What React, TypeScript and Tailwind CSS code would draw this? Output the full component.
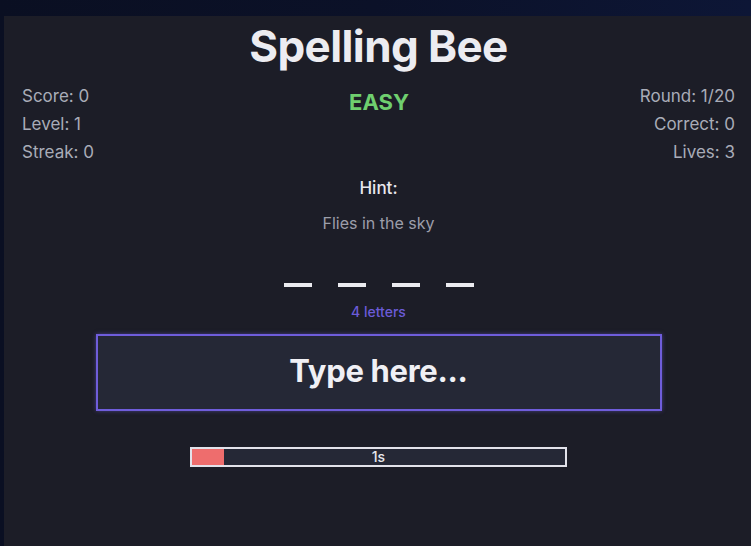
import React from "react";

const leftStats = ["Score: 0", "Level: 1", "Streak: 0"];
const rightStats = ["Round: 1/20", "Correct: 0", "Lives: 3"];
const wordLength = 4;
const timeLeftPct = 8.6;

export default function App() {
  return (
    <div
      className="w-[751px] h-[546px] overflow-hidden bg-gradient-to-r from-[#0a0f22] via-[#0b1128] to-[#0d1636] pt-[16px] pl-[4px]"
      style={{ fontFamily: "Inter, 'Noto Sans', sans-serif" }}
    >
      <div className="h-full bg-[#1c1d27] pt-[4px] pl-[18px] pr-[16px] flex flex-col items-stretch">
        <h1 className="text-center text-[44px] leading-[52px] font-bold tracking-[-0.6px] text-[#ececf1]">
          Spelling Bee
        </h1>

        <div className="mt-[10px] flex justify-between items-start">
          <div className="w-[120px] flex flex-col text-[17px] leading-[28px] text-[#a9acb8]">
            {leftStats.map((s) => (
              <span key={s}>{s}</span>
            ))}
          </div>
          <div className="mt-[6px] text-[22px] leading-[28px] font-bold text-[#6fcf6f] pl-[1px]">
            EASY
          </div>
          <div className="w-[120px] flex flex-col items-end text-[17px] leading-[28px] text-[#a9acb8]">
            {rightStats.map((s) => (
              <span key={s}>{s}</span>
            ))}
          </div>
        </div>

        <div className="mt-[10px] flex flex-col items-center">
          <div className="text-[17px] leading-[24px] font-medium text-[#e8e8ee]">Hint:</div>
          <div className="mt-[11px] text-[16px] leading-[24px] text-[#9c9eaa]">Flies in the sky</div>

          <div className="mt-[48px] flex gap-[26px]">
            {Array.from({ length: wordLength }).map((_, i) => (
              <div key={i} className="w-[28px] h-[4px] bg-[#ebebf0]" />
            ))}
          </div>

          <div className="mt-[15px] text-[14px] leading-[20px] font-medium text-[#6b5bd8]">
            {wordLength} letters
          </div>

          <input
            readOnly
            placeholder="Type here..."
            className="mt-[12px] w-[566px] h-[77px] bg-[#252836] border-2 border-[#6f5ddb] shadow-[0_0_4px_rgba(111,93,219,0.5)] text-center text-[31px] font-bold tracking-[-0.3px] text-[#f0f0f5] placeholder:text-[#f0f0f5] pb-[5px] outline-none"
          />

          <div className="mt-[36px] relative w-[377px] h-[20px] border-2 border-[#e2e2ea] bg-[#252836]">
            <div className="h-full bg-[#ee6d6d]" style={{ width: `${timeLeftPct}%` }} />
            <span className="absolute inset-0 flex items-center justify-center text-[14px] font-medium text-[#e8e8ee] leading-none">
              1s
            </span>
          </div>
        </div>
      </div>
    </div>
  );
}
